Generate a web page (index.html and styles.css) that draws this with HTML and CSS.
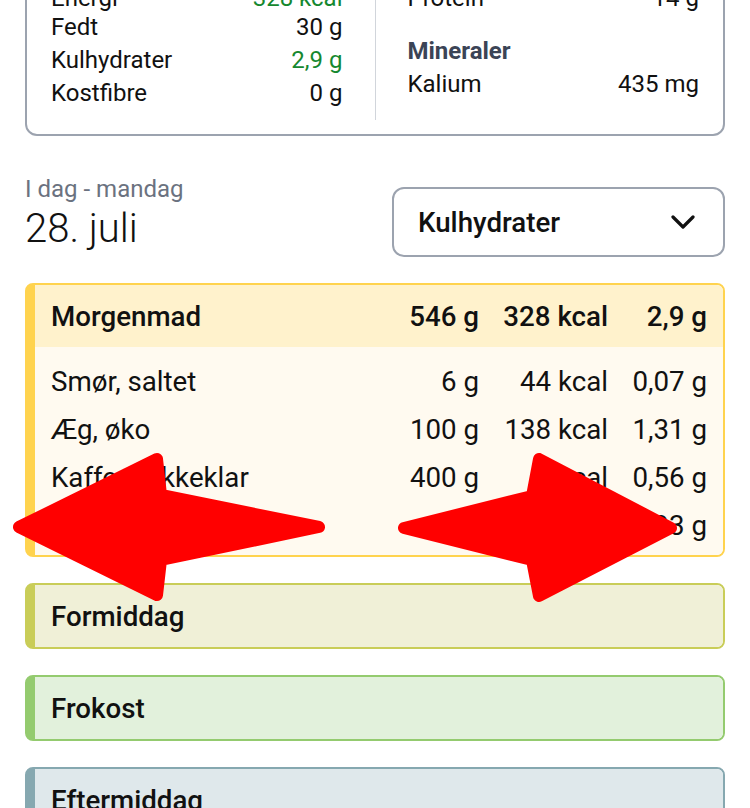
FILE: index.html
```html
<!DOCTYPE html>
<html lang="da">
<head>
<meta charset="utf-8">
<title>Dagbog</title>
<link rel="stylesheet" href="styles.css">
</head>
<body>
<main class="page">
  <section class="summary">
    <div class="col">
      <div class="row first"><span>Energi</span><span class="good">328 kcal</span></div>
      <div class="row"><span>Fedt</span><span>30 g</span></div>
      <div class="row"><span>Kulhydrater</span><span class="good">2,9 g</span></div>
      <div class="row"><span>Kostfibre</span><span>0 g</span></div>
    </div>
    <div class="divider"></div>
    <div class="col">
      <div class="row first"><span>Protein</span><span>14 g</span></div>
      <h3 class="group">Mineraler</h3>
      <div class="row"><span>Kalium</span><span>435 mg</span></div>
    </div>
  </section>

  <div class="dayhead">
    <div class="date">
      <div class="weekday">I dag - mandag</div>
      <div class="day">28. juli</div>
    </div>
    <button class="select" type="button">
      <span>Kulhydrater</span>
      <svg class="chev" width="24" height="14" viewBox="0 0 24 14"><polyline points="2,2 12,12 22,2" fill="none" stroke="#111" stroke-width="3.2" stroke-linecap="round" stroke-linejoin="round"/></svg>
    </button>
  </div>

  <div class="meals">
    <section class="meal breakfast">
      <div class="meal-head grid">
        <span>Morgenmad</span><span class="num">546 g</span><span class="num">328 kcal</span><span class="num">2,9 g</span>
      </div>
      <div class="meal-body">
        <div class="grid item"><span>Smør, saltet</span><span class="num">6 g</span><span class="num">44 kcal</span><span class="num">0,07 g</span></div>
        <div class="grid item"><span>Æg, øko</span><span class="num">100 g</span><span class="num">138 kcal</span><span class="num">1,31 g</span></div>
        <div class="grid item"><span>Kaffe, drikkeklar</span><span class="num">400 g</span><span class="num">8 kcal</span><span class="num">0,56 g</span></div>
        <div class="grid item"><span>Mælk, let</span><span class="num">40 g</span><span class="num">138 kcal</span><span class="num">0,93 g</span></div>
      </div>
    </section>
    <section class="meal forenoon"><div class="meal-head"><span>Formiddag</span></div></section>
    <section class="meal lunch"><div class="meal-head"><span>Frokost</span></div></section>
    <section class="meal afternoon"><div class="meal-head"><span>Eftermiddag</span></div></section>
  </div>
</main>

<svg class="overlay" width="750" height="808" viewBox="0 0 750 808" aria-hidden="true">
  <polygon points="19,527 157,459 161,495 319,527 161,560 157,595" fill="#ff0000" stroke="#ff0000" stroke-width="12" stroke-linejoin="round"/>
  <polygon points="404,528 532,496 539,459 671,528 539,596 532,560" fill="#ff0000" stroke="#ff0000" stroke-width="12" stroke-linejoin="round"/>
</svg>
</body>
</html>
```

FILE: styles.css
```css
* { box-sizing: border-box; }

html, body {
  margin: 0;
  padding: 0;
  background: #ffffff;
}

body {
  position: relative;
  font-family: Roboto, "Liberation Sans", Arial, sans-serif;
  font-size: 24px;
  color: #111111;
  overflow: hidden;
  height: 808px;
}

.page {
  padding: 0 25px;
}

/* summary card */
.summary {
  margin-top: -33px;
  border: 2px solid #9ca3af;
  border-radius: 12px;
  padding: 16px 24px 14px;
  display: grid;
  grid-template-columns: 1fr 1px 1fr;
  column-gap: 32px;
}

.col {
  padding-bottom: 10px;
}

.divider {
  background: #d1d5db;
}

.row {
  display: flex;
  justify-content: space-between;
  line-height: 33px;
}

.row.first {
  line-height: 26px;
}

.group {
  margin: 23px 0 0;
  font-size: 24px;
  font-weight: 700;
  line-height: 34px;
  color: #3b4456;
}

.good {
  color: #15882f;
}

/* day header */
.dayhead {
  margin-top: 38px;
  display: flex;
  justify-content: space-between;
  align-items: flex-start;
}

.weekday {
  font-size: 24px;
  line-height: 30px;
  color: #6b7280;
}

.day {
  font-size: 40px;
  font-weight: 300;
  line-height: 50px;
}

.select {
  margin-top: 13px;
  width: 333px;
  height: 70px;
  border: 2px solid #9ca3af;
  border-radius: 12px;
  background: #ffffff;
  padding: 0 28px 0 24px;
  display: flex;
  align-items: center;
  justify-content: space-between;
  font-family: inherit;
  font-size: 27.7px;
  font-weight: 500;
  color: #111111;
}

.chev {
  display: block;
}

/* meals */
.meals {
  margin-top: 26px;
  display: flex;
  flex-direction: column;
  gap: 26px;
  font-size: 27.7px;
}

.meal {
  border: 2px solid;
  border-left-width: 10px;
  border-radius: 8px;
  overflow: hidden;
}

.meal-head {
  height: 62px;
  padding: 0 16px;
  display: flex;
  align-items: center;
  font-weight: 500;
}

.meal-head.grid {
  display: grid;
}

.grid {
  display: grid;
  grid-template-columns: 1fr 100px 129px 99px;
  align-items: center;
}

.num {
  text-align: right;
  white-space: nowrap;
}

.meal-body {
  padding: 10px 16px 6px;
}

.item {
  height: 48px;
}

.breakfast { border-color: #ffd34e; }
.breakfast .meal-head { background: #fff2cc; }
.breakfast .meal-body { background: #fffaf0; }

.forenoon { border-color: #c9cd58; }
.forenoon .meal-head { background: #f0f0d7; }

.lunch { border-color: #94cb6f; }
.lunch .meal-head { background: #e2f1dc; }

.afternoon { border-color: #86a8b0; }
.afternoon .meal-head { background: #dfe8eb; }

.overlay {
  position: absolute;
  left: 0;
  top: 0;
  pointer-events: none;
}
```
